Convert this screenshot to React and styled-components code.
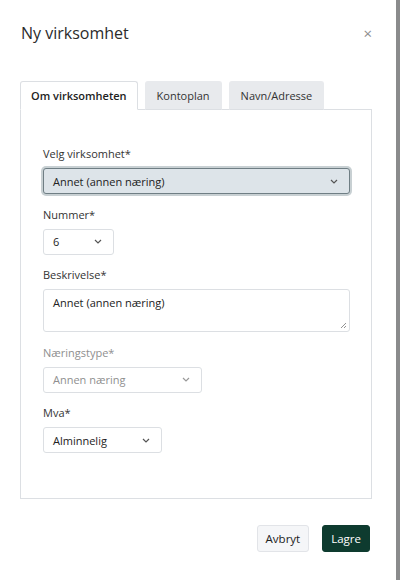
import React from 'react';
import styled, { createGlobalStyle } from 'styled-components';

const GlobalStyle = createGlobalStyle`
  html, body {
    margin: 0;
    padding: 0;
    background: #8a8b8c;
    font-family: 'Open Sans', 'Noto Sans', sans-serif;
    color: #333;
  }
`;

const Modal = styled.div`
  width: 396px;
  height: 580px;
  box-sizing: border-box;
  background: #fff;
  padding: 0 24px 0 20px;
  display: flex;
  flex-direction: column;
`;

const Header = styled.div`
  display: flex;
  justify-content: space-between;
  align-items: center;
  height: 66px;
  padding-left: 1px;
`;

const Title = styled.h2`
  margin: 0;
  font-size: 16px;
  font-weight: 400;
  color: #2b2b2b;
`;

const Close = styled.span`
  font-size: 15px;
  color: #8d8d8d;
  line-height: 1;
`;

const Tabs = styled.div`
  display: flex;
  gap: 7px;
  margin-top: 15px;
  position: relative;
  z-index: 1;
`;

const Tab = styled.div`
  height: 29px;
  box-sizing: border-box;
  padding: 0 ${p => (p.$active ? 10 : 11)}px;
  display: flex;
  align-items: center;
  font-size: 11px;
  font-weight: ${p => (p.$active ? 600 : 400)};
  color: ${p => (p.$active ? '#222' : '#333')};
  background: ${p => (p.$active ? '#fff' : '#e8eaed')};
  border: 1px solid ${p => (p.$active ? '#dcdfe3' : '#e8eaed')};
  border-bottom: 1px solid ${p => (p.$active ? '#fff' : '#dcdfe3')};
  border-radius: 3px 3px 0 0;
  margin-bottom: -1px;
`;

const Panel = styled.div`
  border: 1px solid #dcdfe3;
  height: 390px;
  box-sizing: border-box;
  padding: 36px 22px 0 22px;
  display: flex;
  flex-direction: column;
`;

const Label = styled.label`
  font-size: 11px;
  line-height: 16px;
  color: ${p => (p.$disabled ? '#8f8f8f' : '#333')};
  margin-bottom: 6px;
`;

const Field = styled.div`
  display: flex;
  flex-direction: column;
  margin-bottom: 12.6px;
`;

const Select = styled.div`
  width: ${p => p.$w}px;
  height: 26px;
  box-sizing: border-box;
  display: flex;
  align-items: center;
  justify-content: space-between;
  padding: 0 11px 0 9px;
  font-size: 11px;
  color: ${p => (p.$disabled ? '#8f8f8f' : '#222')};
  background: ${p => (p.$focus ? '#dde4e9' : '#fff')};
  border: 1px solid ${p => (p.$focus ? '#6f7e84' : '#dcdfe3')};
  border-radius: 3px;
  box-shadow: ${p => (p.$focus ? '0 0 0 2px #c8d0d3' : 'none')};
`;

const TextArea = styled.div`
  width: 307px;
  height: 43px;
  box-sizing: border-box;
  border: 1px solid #dcdfe3;
  border-radius: 3px;
  padding: 5px 9px;
  font-size: 11px;
  color: #222;
  position: relative;
`;

const Grip = styled.svg`
  position: absolute;
  right: 2px;
  bottom: 2px;
`;

const Footer = styled.div`
  display: flex;
  justify-content: flex-end;
  gap: 13px;
  margin-top: 26px;
  padding-right: 2px;
`;

const Button = styled.button`
  height: 27px;
  padding: 0 8px;
  font-family: inherit;
  font-size: 11.5px;
  border-radius: 3px;
  border: 1px solid ${p => (p.$primary ? '#0e3b2f' : '#e2e4e8')};
  background: ${p => (p.$primary ? '#0e3b2f' : '#f5f6f8')};
  color: ${p => (p.$primary ? '#fff' : '#222')};
`;

const Chevron = ({ color = '#555' }) => (
  <svg width="8" height="5" viewBox="0 0 8 5">
    <path d="M1 1l3 3 3-3" fill="none" stroke={color} strokeWidth="1.2" />
  </svg>
);

export default function App() {
  return (
    <>
      <GlobalStyle />
      <Modal>
        <Header>
          <Title>Ny virksomhet</Title>
          <Close>×</Close>
        </Header>
        <Tabs>
          <Tab $active>Om virksomheten</Tab>
          <Tab>Kontoplan</Tab>
          <Tab>Navn/Adresse</Tab>
        </Tabs>
        <Panel>
          <Field>
            <Label>Velg virksomhet*</Label>
            <Select $w={307} $focus>
              Annet (annen næring)
              <Chevron />
            </Select>
          </Field>
          <Field>
            <Label>Nummer*</Label>
            <Select $w={71}>
              6
              <Chevron />
            </Select>
          </Field>
          <Field>
            <Label>Beskrivelse*</Label>
            <TextArea>
              Annet (annen næring)
              <Grip width="7" height="7" viewBox="0 0 7 7">
                <path d="M6 1L1 6M6 4L4 6" stroke="#777" strokeWidth="0.8" />
              </Grip>
            </TextArea>
          </Field>
          <Field>
            <Label $disabled>Næringstype*</Label>
            <Select $w={159} $disabled>
              Annen næring
              <Chevron color="#999" />
            </Select>
          </Field>
          <Field>
            <Label>Mva*</Label>
            <Select $w={119}>
              Alminnelig
              <Chevron />
            </Select>
          </Field>
        </Panel>
        <Footer>
          <Button>Avbryt</Button>
          <Button $primary>Lagre</Button>
        </Footer>
      </Modal>
    </>
  );
}
